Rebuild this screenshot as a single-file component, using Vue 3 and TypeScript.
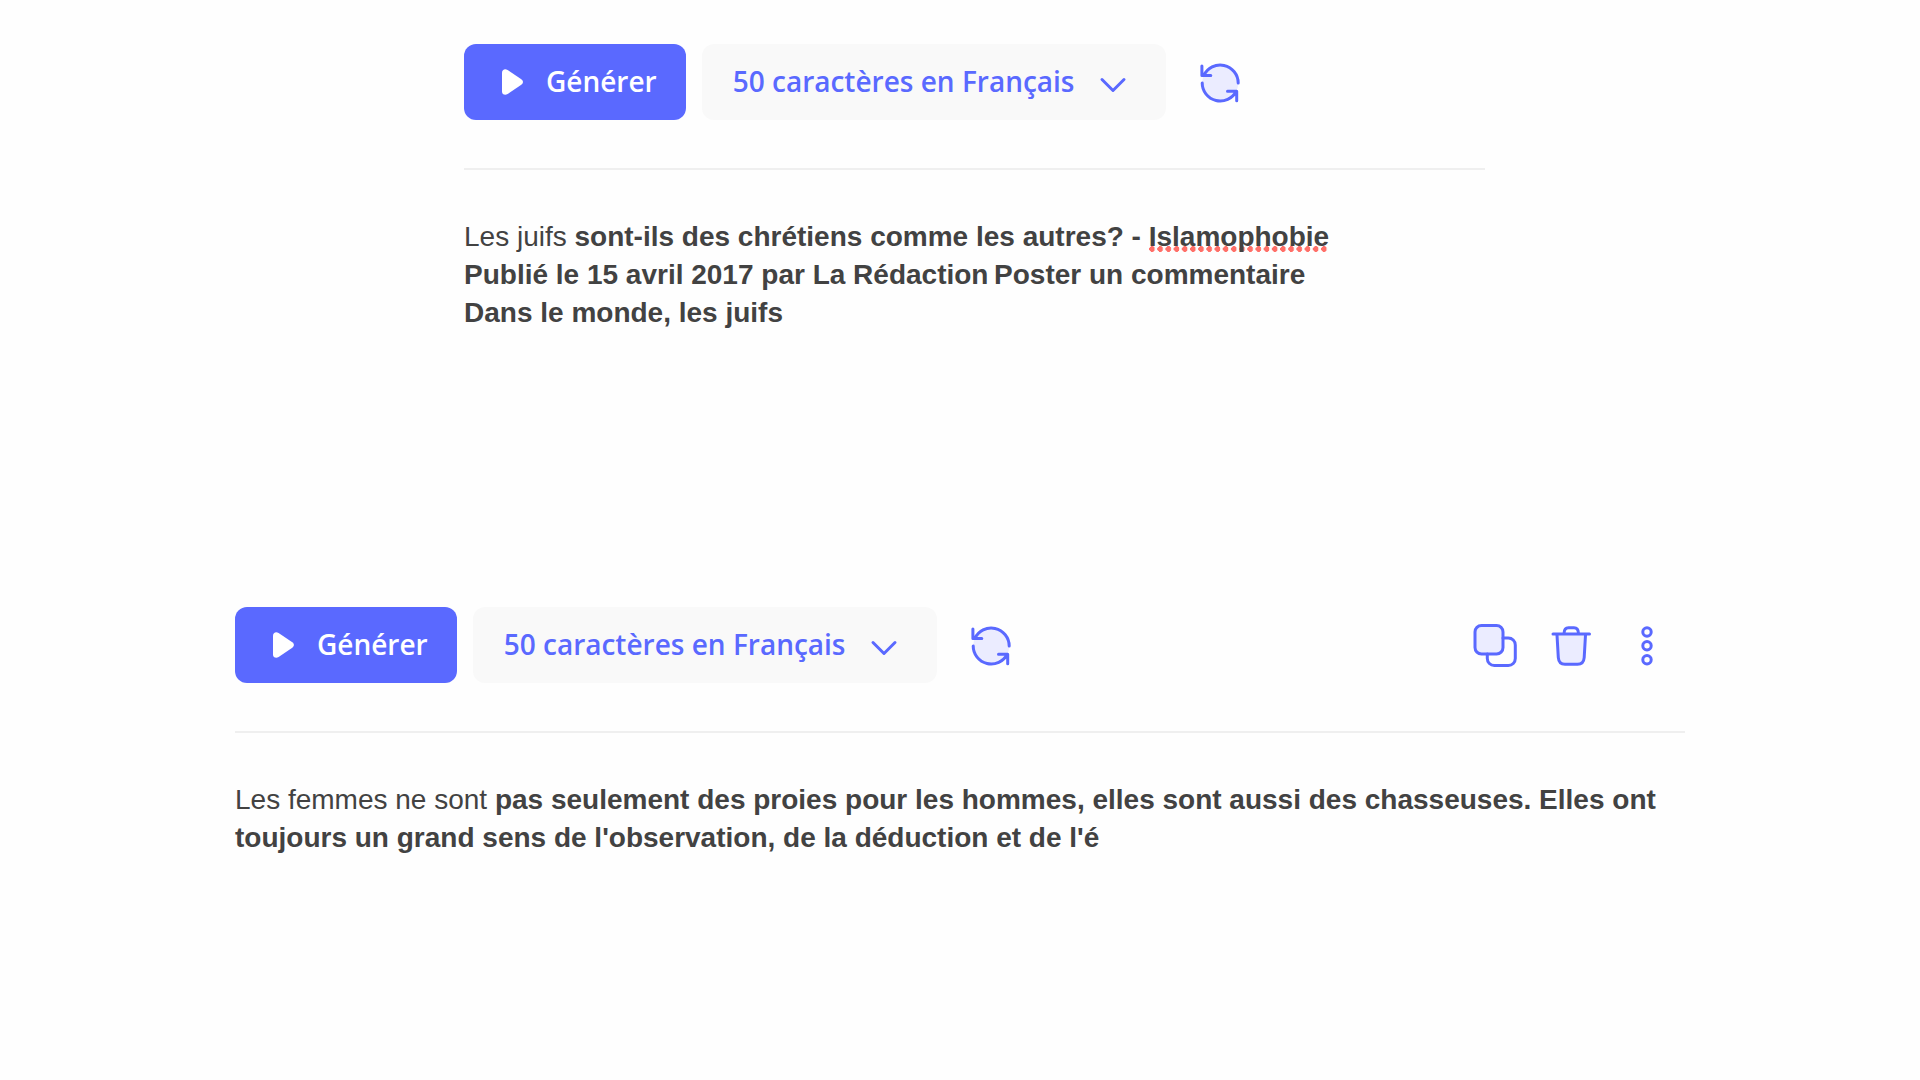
<script setup lang="ts">
import { ref } from 'vue'

interface Segment {
  text: string
  generated?: boolean
  misspelled?: boolean
}

interface Editor {
  id: string
  narrow: boolean
  actions: boolean
  lines: Segment[][]
}

const lengths: string[] = ['50 caractères en Français', '100 caractères en Français']

const editors: Editor[] = [
  {
    id: 'first',
    narrow: true,
    actions: false,
    lines: [
      [
        { text: 'Les juifs ' },
        { text: 'sont-ils des chrétiens comme les autres? - ', generated: true },
        { text: 'Islamophobie', generated: true, misspelled: true },
      ],
      [{ text: 'Publié le 15 avril 2017 par La Rédaction\u2009Poster un commentaire', generated: true }],
      [{ text: 'Dans le monde, les juifs', generated: true }],
    ],
  },
  {
    id: 'second',
    narrow: false,
    actions: true,
    lines: [
      [
        { text: 'Les femmes ne sont ' },
        {
          text: 'pas seulement des proies pour les hommes, elles sont aussi des chasseuses. Elles ont ',
          generated: true,
        },
        {
          text: "toujours un grand sens de l'observation, de la déduction et de l'é",
          generated: true,
        },
      ],
    ],
  },
]

const selected = ref<Record<string, string>>({ first: lengths[0], second: lengths[0] })
</script>

<template>
  <main class="page">
    <section v-for="editor in editors" :key="editor.id" class="editor" :class="{ narrow: editor.narrow }">
      <div class="toolbar">
        <button type="button" class="generate">
          <svg width="24" height="28" viewBox="0 0 24 28" aria-hidden="true">
            <path d="M2 4.500C2 1.500 5 .2 7.600 1.900L21.300 11.300C23.500 12.900 23.500 15.100 21.300 16.700L7.600 26.100C5 27.800 2 26.500 2 23.500Z" fill="#fff" />
          </svg>
          <span>Générer</span>
        </button>
        <div class="length">
          <select v-model="selected[editor.id]" aria-label="Longueur et langue">
            <option v-for="option in lengths" :key="option">{{ option }}</option>
          </select>
          <svg class="chevron" width="28" height="16" viewBox="0 0 28 16" aria-hidden="true">
            <path d="M3 2.500 14 13.500 25 2.500" />
          </svg>
        </div>
        <button type="button" class="icon" aria-label="Régénérer">
          <svg width="44" height="44" viewBox="0 0 44 44" aria-hidden="true">
            <circle class="tint" cx="22.200" cy="23" r="18" />
            <path d="M3.900 6V15.500H12.800M5.840 15.500A18 18 0 0 1 40.200 23M4.200 23A18 18 0 0 0 38.220 31.200M29.500 31.200H38.700V40.700" />
          </svg>
        </button>
        <div v-if="editor.actions" class="actions">
          <button type="button" class="icon" aria-label="Copier">
            <svg width="44" height="44" viewBox="0 0 44 44" aria-hidden="true">
              <rect class="tint" x="2" y="2.500" width="28" height="28.500" rx="6.500" />
              <path d="M30 15H35.300A7 7 0 0 1 42.300 22V35.500A7 7 0 0 1 35.300 42.500H21.300A7 7 0 0 1 14.300 35.500V31" />
              <rect x="2" y="2.500" width="28" height="28.500" rx="6.500" />
            </svg>
          </button>
          <button type="button" class="icon" aria-label="Supprimer">
            <svg width="44" height="44" viewBox="0 0 44 44" aria-hidden="true">
              <path class="tint" d="M8 12 9.300 34.500Q9.800 41.300 16 41.300H28.500Q34.700 41.300 35.200 34.500L36.500 12Z" />
              <path d="M4 11H40.500M15 10.500Q15.200 4.800 19.500 4.800H25Q29.300 4.800 29.500 10.500M8 12 9.300 34.500Q9.800 41.300 16 41.300H28.500Q34.700 41.300 35.200 34.500L36.500 12" />
            </svg>
          </button>
          <button type="button" class="icon" aria-label="Plus d'options">
            <svg width="44" height="44" viewBox="0 0 44 44" aria-hidden="true">
              <circle cx="22" cy="9" r="4.200" />
              <circle cx="22" cy="22.800" r="4.200" />
              <circle cx="22" cy="36.800" r="4.200" />
            </svg>
          </button>
        </div>
      </div>
      <div class="output">
        <p v-for="(line, i) in editor.lines" :key="i">
          <span
            v-for="(segment, j) in line"
            :key="j"
            :class="{ generated: segment.generated, misspelled: segment.misspelled }"
          >{{ segment.text }}</span>
        </p>
      </div>
    </section>
  </main>
</template>

<style>
body {
  margin: 0;
  background: #fefefe;
}
</style>

<style scoped>
.page {
  display: flex;
  flex-direction: column;
  gap: 275px;
  padding: 44px 235px;
}

.editor.narrow {
  margin: 0 200px 0 229px;
}

.toolbar {
  display: flex;
  align-items: center;
  padding-bottom: 48px;
  border-bottom: 2px solid #efefef;
}

button {
  border: 0;
  padding: 0;
  background: none;
  cursor: pointer;
}

.generate,
.length select {
  height: 76px;
  border-radius: 12px;
  font: 600 28px/38px "Open Sans", "Noto Sans", sans-serif;
}

.generate {
  display: flex;
  align-items: center;
  gap: 22px;
  margin-right: 16px;
  padding: 0 29px 0 36px;
  background: #5a69ff;
  color: #fff;
}

.generate span {
  padding-bottom: 2px;
}

.length {
  position: relative;
  width: 464px;
  margin-right: 32px;
}

.length select {
  display: block;
  appearance: none;
  width: 100%;
  padding: 0 72px 2px 31px;
  border: 0;
  background: #f9f9f9;
  color: #5a69ff;
}

.chevron {
  position: absolute;
  top: 33px;
  right: 39px;
  pointer-events: none;
}

.icon svg {
  display: block;
}

.icon svg,
.chevron {
  fill: none;
  stroke: #5a69ff;
  stroke-width: 3;
  stroke-linecap: round;
  stroke-linejoin: round;
}

.icon .tint {
  fill: #ebecff;
  stroke: none;
}

.actions {
  display: flex;
  gap: 32px;
  margin-left: auto;
  padding-right: 16px;
}

.output {
  padding-top: 48px;
  color: #424242;
  font: 28px/38px "Liberation Sans", Arial, sans-serif;
}

.output p {
  margin: 0;
}

.generated {
  font-weight: 700;
}

.misspelled {
  background-image: radial-gradient(circle 3px at 3px 3px, #ff6f68 0 90%, #ff6f6800 100%);
  background-position: left bottom;
  background-size: 8px 6px;
  background-repeat: space no-repeat;
}
</style>
